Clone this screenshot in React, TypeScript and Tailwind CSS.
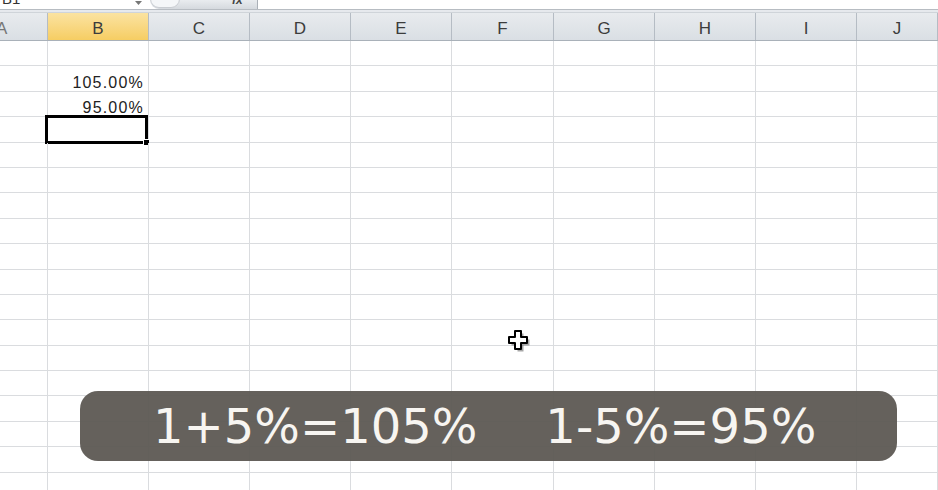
const cols = [
  { label: "A", w: "w-[48px]" },
  { label: "B", w: "w-[101px]" },
  { label: "C", w: "w-[101px]" },
  { label: "D", w: "w-[101px]" },
  { label: "E", w: "w-[101px]" },
  { label: "F", w: "w-[102px]" },
  { label: "G", w: "w-[101px]" },
  { label: "H", w: "w-[101px]" },
  { label: "I", w: "w-[101px]" },
  { label: "J", w: "w-[81px]" },
];

const cellValues: Record<string, string> = {
  "1-B": "105.00%",
  "2-B": "95.00%",
};

function CursorCross() {
  return (
    <svg
      className="absolute left-[507px] top-[329px]"
      width="25"
      height="25"
      viewBox="0 0 25 25"
    >
      <path
        d="M9 3h6v6h6v6h-6v6H9v-6H3V9h6z"
        transform="translate(1.5 1.5)"
        fill="#000"
        opacity="0.35"
      />
      <path
        d="M8 2h6v6h6v6h-6v6H8v-6H2V8h6z"
        fill="#fff"
        stroke="#000"
        strokeWidth="2"
        strokeLinejoin="round"
      />
    </svg>
  );
}

export default function App() {
  const rows = Array.from({ length: 18 }, (_, i) => i);

  return (
    <div className="relative w-[938px] h-[490px] overflow-hidden bg-white font-['Liberation_Sans',Arial,sans-serif]">
      {/* Formula bar strip */}
      <div className="flex h-[9px] bg-white">
        <div className="relative w-[150px] overflow-hidden">
          <span className="absolute left-[2px] -top-[9px] text-[15px] leading-none text-[#333]">B1</span>
          <svg className="absolute left-[135px] top-[1px]" width="7" height="4" viewBox="0 0 7 4">
            <path d="M0 0h7L3.5 4z" fill="#777" />
          </svg>
        </div>
        <div className="relative w-[107px] rounded-bl-[10px] bg-gradient-to-b from-[#e9ecef] to-[#d5d9de] overflow-hidden">
          <div className="absolute left-0 -top-[10px] w-[30px] h-[18px] rounded-full bg-[#f4f6f8] border border-[#c9cdd2]" />
          <span className="absolute left-[82px] -top-[6px] text-[12px] italic font-bold leading-none text-[#444]">fx</span>
        </div>
        <div className="w-px bg-[#aab0b7]" />
        <div className="flex-1 bg-white" />
      </div>
      <div className="h-px bg-[#b7bcc2]" />
      <div className="h-[3px] bg-[#e6e9ed] border-b border-[#cfd4d9]" />

      {/* Column headers */}
      <div className="flex h-[28px] border-b border-[#a9b1b9]">
        {cols.map((c) => (
          <div
            key={c.label}
            className={`${c.w} shrink-0 flex items-center justify-center pt-[5px] border-r border-[#b5bcc4] text-[17px] text-[#3c3c3c] ${
              c.label === "B"
                ? "bg-gradient-to-b from-[#fbe3a0] to-[#f6cd62]"
                : "bg-gradient-to-b from-[#e8ebee] to-[#dadfe4]"
            } ${c.label === "A" ? "justify-start pl-0 text-[12px]" : ""}`}
          >
            {c.label === "A" ? <span className="-ml-[4px] text-[#777]">A</span> : c.label}
          </div>
        ))}
      </div>

      {/* Grid */}
      {rows.map((r) => (
        <div key={r} className="flex h-[25.4px]">
          {cols.map((c) => {
            const key = `${r}-${c.label}`;
            const value = cellValues[key];
            const selected = r === 3 && c.label === "B";
            return (
              <div
                key={key}
                className={`${c.w} shrink-0 relative flex items-end justify-end pr-[4px] pb-0 border-r border-b border-[#dadcdf] text-[16px] leading-none tracking-[1.2px] text-[#222]`}
              >
                {value}
                {selected && (
                  <div className="absolute -left-[3px] -top-[2px] -right-[0px] -bottom-[2px] border-[3px] border-black">
                    <div className="absolute -right-[5px] -bottom-[5px] w-[7px] h-[7px] bg-black border border-white" />
                  </div>
                )}
              </div>
            );
          })}
        </div>
      ))}

      <CursorCross />

      {/* Caption banner */}
      <div className="absolute left-[80px] top-[391px] w-[817px] h-[70px] rounded-[18px] bg-[#5d5853]/95 flex items-center justify-start pl-[73px] gap-[68px] font-['DejaVu_Sans',Verdana,sans-serif] text-[48px] leading-none text-[#f7f5f1]">
        <span>1+5%=105%</span>
        <span>1-5%=95%</span>
      </div>
    </div>
  );
}
